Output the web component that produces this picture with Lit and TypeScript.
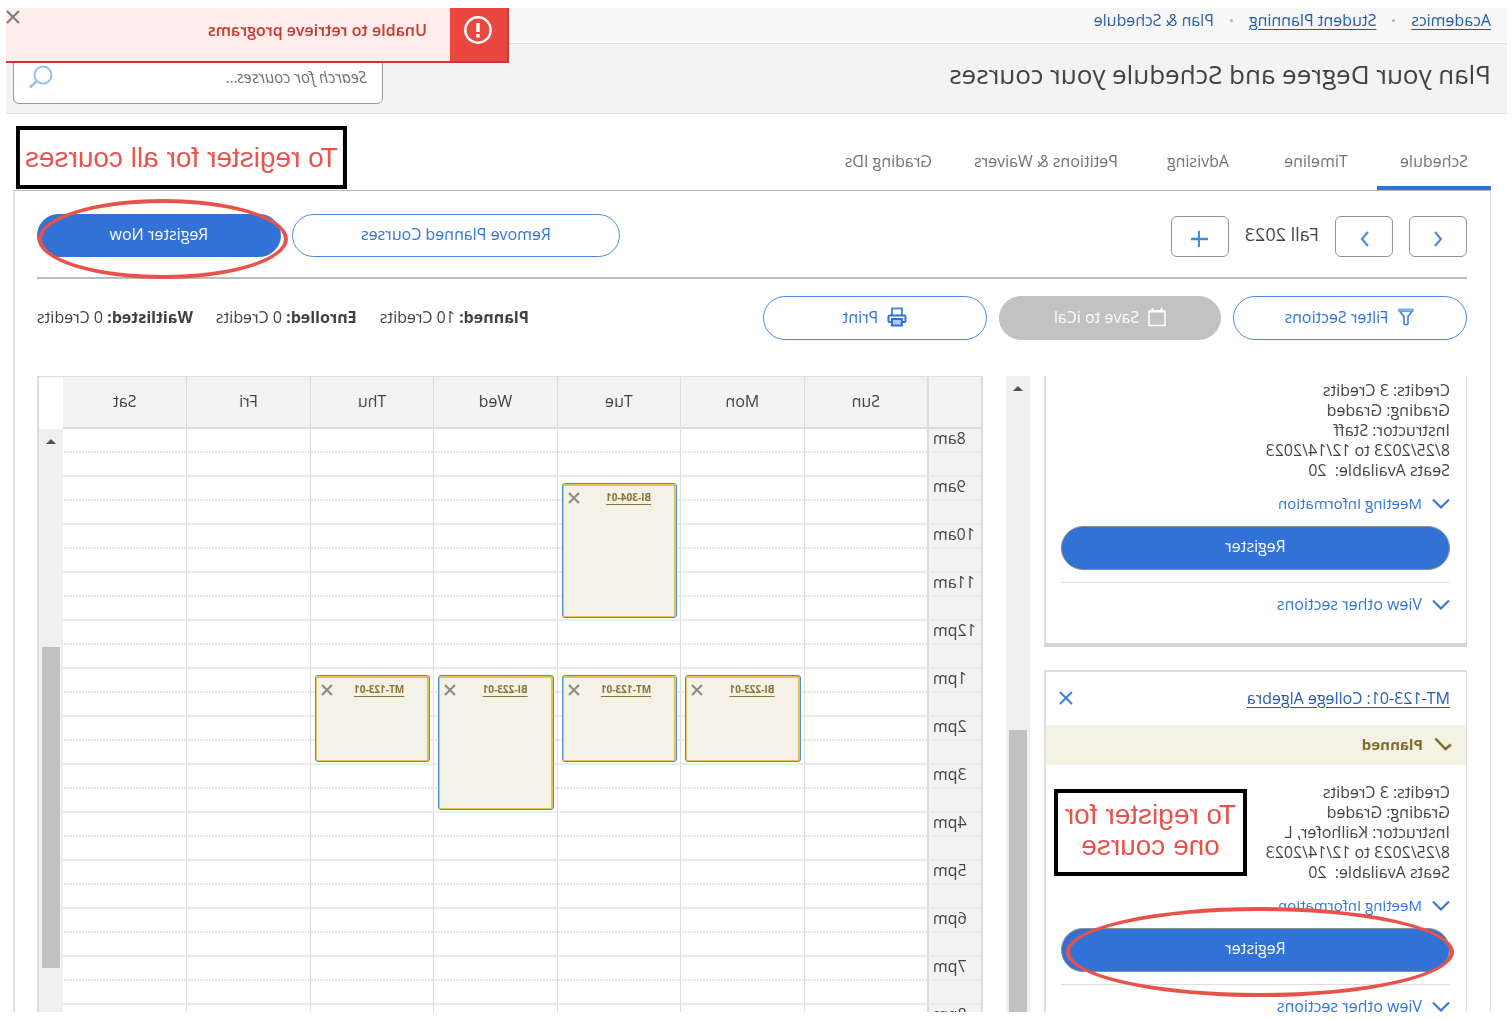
import { LitElement, html, svg, css, nothing } from "lit";
import { customElement, property } from "lit/decorators.js";

interface Section {
  title: string;
  instructor: string;
  seats: number;
}

interface CalendarEvent {
  day: string;
  hour: string;
  code: string;
  height: number;
}

const DAYS = ["Sun", "Mon", "Tue", "Wed", "Thu", "Fri", "Sat"];
const HOURS = ["8am", "9am", "10am", "11am", "12pm", "1pm", "2pm", "3pm", "4pm", "5pm", "6pm", "7pm", "8pm"];
const EVENTS: CalendarEvent[] = [
  { day: "Tue", hour: "9am", code: "BI-304-01", height: 135 },
  { day: "Mon", hour: "1pm", code: "BI-223-01", height: 87 },
  { day: "Tue", hour: "1pm", code: "MT-123-01", height: 87 },
  { day: "Wed", hour: "1pm", code: "BI-223-01", height: 135 },
  { day: "Thu", hour: "1pm", code: "MT-123-01", height: 87 },
];
const TABS = ["Schedule", "Timeline", "Advising", "Petitions & Waivers", "Grading IDs"];
const TOTALS = [
  ["Planned:", "10 Credits"],
  ["Enrolled:", "0 Credits"],
  ["Waitlisted:", "0 Credits"],
];

const icon = (w: number, h: number, body: unknown) =>
  html`<svg width=${w} height=${h} viewBox="0 0 ${w} ${h}" fill="none" stroke="currentColor" aria-hidden="true">${body}</svg>`;

const chevronLeft = icon(12, 18, svg`<path d="M9 2 L3 9 L9 16" stroke-width="2"/>`);
const chevronRight = icon(12, 18, svg`<path d="M2 2 L8 9 L2 16" stroke-width="2"/>`);
const chevronDown = icon(18, 12, svg`<path d="M1 1.500 L9 9.500 L17 1.500" stroke-width="2"/>`);
const plus = icon(18, 18, svg`<path d="M1 9 H18" stroke-width="2.500"/><path d="M10 1 V17" stroke-width="2"/>`);
const check = icon(18, 14, svg`<path d="M1 7.500 L6.500 12 L16.500 1.500" stroke-width="2.500"/>`);
const cross = icon(14, 14, svg`<path d="M1 1 L13 13 M13 1 L1 13" stroke-width="2"/>`);
const crossSmall = icon(12, 12, svg`<path d="M1 1 L11 11 M11 1 L1 11" stroke-width="2"/>`);
const magnifier = icon(24, 24, svg`<circle cx="10" cy="10" r="8.500" stroke-width="2"/><path d="M16 16 L23 22.500" stroke-width="2.500"/>`);
const alertCircle = icon(30, 30, svg`<circle cx="15" cy="15" r="12.700" stroke-width="2.500"/><path d="M15 8 V17" stroke-width="3.500"/><path d="M15 19 V22.500" stroke-width="3.500"/>`);
const funnel = icon(18, 18, svg`<path d="M2.500 3 H15.500 L11 8.500 V16 Q9 17.500 7 16 V8.500 Z" fill="#fff" stroke-width="1.500" stroke-linejoin="round"/><path d="M1 2 H17" stroke-width="3" stroke="#7daee8"/>`);
const calendarIcon = icon(18, 20, svg`<rect x="1" y="4" width="16" height="14.500" stroke-width="1.500"/><path d="M1 4.500 H17" stroke-width="2"/><path d="M4.500 1 V4 M13.500 1 V4" stroke-width="2"/>`);
const printer = icon(20, 20, svg`<path d="M5 9 V1.500 H15 V9" stroke="#4a8bdc" stroke-width="2"/><rect x="1.500" y="8.500" width="17" height="6.500" rx="1" stroke-width="2"/><rect x="5" y="12" width="10" height="6.500" fill="#a9cbf2" stroke-width="2"/>`);

@customElement("scroll-track")
class ScrollTrack extends LitElement {
  static styles = css`
    :host {
      display: flex;
      flex-direction: column;
      align-items: center;
      flex: 0 0 24px;
      background: #f0f0f0;
    }
    .arrow {
      width: 10px;
      height: 5px;
      flex: none;
      margin-top: 10px;
      background: #505050;
      clip-path: polygon(50% 0, 100% 100%, 0 100%);
    }
    .thumb {
      width: 18px;
      background: #c1c1c1;
    }
  `;
  @property({ type: Number }) before = 1;
  @property({ type: Number }) size = 1;
  @property({ type: Number }) after = 0;
  render() {
    return html`
      <div class="arrow"></div>
      <div style="flex:${this.before} 1 0"></div>
      <div class="thumb" style="flex:${this.size} 1 0"></div>
      <div style="flex:${this.after} 1 0"></div>
    `;
  }
}

@customElement("section-card")
class SectionCard extends LitElement {
  static styles = css`
    :host {
      display: block;
      position: relative;
      border: 1px solid #dedede;
      border-right-width: 2px;
      border-bottom: 4px solid #d4d4d4;
      color: #3f3f3f;
      font-size: 16px;
      line-height: 20px;
      margin-bottom: 23px;
    }
    :host([headed]) {
      border-top-width: 2px;
    }
    :host(:not([headed])) {
      border-top: 0;
    }
    button {
      font: inherit;
      cursor: pointer;
    }
    .head {
      display: flex;
      justify-content: space-between;
      align-items: center;
      box-sizing: border-box;
      height: 53px;
      padding: 0 13px 2px 16px;
    }
    .head a {
      color: #2159a8;
      text-underline-offset: 3px;
    }
    .close {
      display: flex;
      border: 0;
      padding: 0 0 0 2px;
      margin-right: 0;
      background: none;
      color: #3b7fd6;
    }
    .status {
      display: flex;
      align-items: center;
      gap: 11px;
      box-sizing: border-box;
      height: 40px;
      padding: 0 14px 2px;
      background: #f4f1e5;
      color: #7f6a26;
      font-weight: 700;
      font-size: 15px;
    }
    .body {
      padding: 4px 15px 29px 16px;
    }
    :host([headed]) .body {
      padding-top: 17px;
    }
    .seats {
      white-space: pre;
    }
    .line {
      margin: 0;
    }
    .toggle {
      display: flex;
      align-items: center;
      gap: 10px;
      border: 0;
      padding: 0;
      background: none;
      color: #2f72d6;
      font-size: 16px;
      line-height: 20px;
    }
    .meeting {
      margin: 13px 0;
      font-size: 15px;
    }
    .toggle svg {
      margin-top: 2px;
    }
    .action {
      position: relative;
      padding-bottom: 12px;
    }
    .register {
      display: block;
      width: 100%;
      height: 44px;
      padding: 0 0 4px;
      border: 1px solid #8d8f93;
      border-radius: 22px;
      background: #3172d6;
      color: #fff;
      font-weight: 500;
    }
    .more {
      border-top: 1px solid #dedede;
      padding-top: 11px;
    }
  `;
  @property({ attribute: false }) section!: Section;
  @property({ type: Boolean, reflect: true }) headed = false;
  render() {
    const s = this.section;
    return html`
      ${this.headed
        ? html`<div class="head">
              <a href="#section">${s.title}</a>
              <button class="close" aria-label="Remove section">${cross}</button>
            </div>
            <div class="status">${check}<span>Planned</span></div>`
        : nothing}
      <div class="body">
        <p class="line">Credits: 3 Credits</p>
        <p class="line">Grading: Graded</p>
        <p class="line">Instructor: ${s.instructor}</p>
        <p class="line">8/25/2023 to 12/14/2023</p>
        <p class="line seats">Seats Available:  ${s.seats}</p>
        <button class="toggle meeting">${chevronDown}<span>Meeting Information</span></button>
        <div class="action"><button class="register">Register</button><slot name="highlight"></slot></div>
        <div class="more"><button class="toggle">${chevronDown}<span>View other sections</span></button></div>
      </div>
      <slot name="note"></slot>
    `;
  }
}

@customElement("week-calendar")
class WeekCalendar extends LitElement {
  static styles = css`
    :host {
      display: flex;
      min-width: 0;
      min-height: 0;
      overflow: hidden;
      border: 1px solid #dcdcdc;
      border-width: 1px 2px 0;
      color: #3f3f3f;
      font-size: 16px;
    }
    table {
      flex: 1;
      width: 0;
      height: min-content;
      table-layout: fixed;
      border-collapse: separate;
      border-spacing: 0;
    }
    .time-col {
      width: 54px;
    }
    th {
      font-weight: 400;
      padding: 0;
      box-sizing: border-box;
    }
    thead th {
      height: 52px;
      padding-bottom: 2px;
      background: #f3f3f3;
      border-right: 1px solid #dcdcdc;
      border-bottom: 2px solid #dcdcdc;
    }
    thead th:first-child,
    tbody th {
      border-right: 2px solid #dcdcdc;
    }
    tr > :last-child {
      border-right: 0;
    }
    tbody th,
    td {
      height: 48px;
      box-sizing: border-box;
      border-bottom: 2px solid #ebebeb;
      background: repeating-linear-gradient(90deg, #e6e6e6 0 2px, transparent 2px 3px) 0 22px / 100% 2px no-repeat;
    }
    tbody th {
      background-color: #f3f3f3;
      text-align: right;
      vertical-align: top;
      line-height: 18px;
      padding-right: 4px;
    }
    td {
      position: relative;
      padding: 0;
      border-right: 1px solid #dcdcdc;
    }
    .event {
      position: absolute;
      z-index: 1;
      top: 6px;
      left: 3px;
      right: 4px;
      box-sizing: border-box;
      display: flex;
      align-items: flex-start;
      justify-content: space-between;
      padding: 6px 5px 0 25px;
      border: 1px solid #4d8bd6;
      border-radius: 3px;
      background: #f4f2e6;
      box-shadow: inset 1px 1px 0 1px #e4c653, inset 0 0 0 1px #e4c653;
    }
    .event a {
      color: #8a7233;
      font-size: 10px;
      font-weight: 700;
      line-height: 14px;
      text-decoration-thickness: 1px;
      text-underline-offset: 3px;
    }
    .event button {
      display: flex;
      border: 0;
      padding: 2px 0 0;
      background: none;
      color: #8a8a84;
    }
    .side {
      display: flex;
      flex-direction: column;
      flex: 0 0 24px;
    }
    .side scroll-track {
      flex: 1;
      margin-top: 52px;
    }
  `;
  render() {
    return html`
      <table>
        <colgroup>
          <col class="time-col" />
          ${DAYS.map(() => html`<col />`)}
        </colgroup>
        <thead>
          <tr>
            <th></th>
            ${DAYS.map((d) => html`<th scope="col">${d}</th>`)}
          </tr>
        </thead>
        <tbody>
          ${HOURS.map(
            (h) => html`<tr>
              <th scope="row">${h}</th>
              ${DAYS.map((d) => {
                const e = EVENTS.find((x) => x.day === d && x.hour === h);
                return html`<td>
                  ${e
                    ? html`<div class="event" style="height:${e.height}px">
                        <a href="#event">${e.code}</a>
                        <button aria-label="Remove ${e.code}">${crossSmall}</button>
                      </div>`
                    : nothing}
                </td>`;
              })}
            </tr>`
          )}
        </tbody>
      </table>
      <div class="side"><scroll-track .before=${203} .size=${321} .after=${44}></scroll-track></div>
    `;
  }
}

@customElement("app-root")
class AppRoot extends LitElement {
  static styles = css`
    :host {
      display: block;
      background: #fff;
      font-family: "Open Sans", "Noto Sans", sans-serif;
      font-size: 16px;
      color: #3f3f3f;
    }
    /* The whole page reads right to left as a mirror image. */
    .mirror {
      transform: scaleX(-1);
      height: 100vh;
      box-sizing: border-box;
      padding: 8px 6px 8px 5px;
      overflow: hidden;
    }
    .page {
      position: relative;
      display: flex;
      flex-direction: column;
      height: 100%;
      overflow: hidden;
    }
    button {
      font: inherit;
      cursor: pointer;
    }
    .crumbs {
      display: flex;
      align-items: center;
      padding: 0 16px 11px;
      border-bottom: 1px solid #dedede;
      background: #f7f7f7;
      line-height: 24px;
      color: #2b5c9e;
    }
    .crumbs a {
      color: #1f5aa6;
      text-underline-offset: 3px;
    }
    .dot {
      width: 3px;
      height: 3px;
      margin: 0 16px;
      border-radius: 50%;
      background: #b5b5b5;
    }
    .title-bar {
      display: flex;
      align-items: flex-start;
      justify-content: space-between;
      height: 69px;
      padding: 0 7px 0 16px;
      background: #f3f3f3;
      border-bottom: 1px solid #dedede;
    }
    h1 {
      margin: 14px 0 0;
      font-size: 26px;
      font-weight: 400;
      line-height: 32px;
    }
    .search {
      display: flex;
      align-items: center;
      box-sizing: border-box;
      width: 370px;
      height: 50px;
      margin-top: 10px;
      padding: 0 15px 4px;
      border: 1px solid #999;
      border-radius: 6px;
      background: #fff;
      color: #93c1f7;
    }
    .search input {
      flex: 1;
      min-width: 0;
      border: 0;
      padding: 0;
      outline: 0;
      background: none;
      font: inherit;
      font-style: italic;
      color: #3f3f3f;
    }
    .search input::placeholder {
      color: #6f6f6f;
      opacity: 1;
    }
    .alert {
      position: absolute;
      z-index: 2;
      top: 0;
      right: 0;
      display: flex;
      box-sizing: border-box;
      width: 503px;
      height: 55px;
      background: #fdeeed;
      border-bottom: 2px solid #c93833;
    }
    .alert-icon {
      box-sizing: border-box;
      display: flex;
      justify-content: center;
      width: 59px;
      padding-top: 7px;
      background: #eb4640;
      border-left: 2px solid #c93833;
      color: #fff;
    }
    .alert-text {
      flex: 1;
      padding: 10px 0 0 23px;
      font-weight: 600;
      line-height: 24px;
      color: #c8352f;
    }
    .alert-close {
      display: flex;
      align-self: flex-start;
      padding: 2px 0 0;
      border: 0;
      background: none;
      color: #7c7c7c;
    }
    .tabs {
      display: flex;
      gap: 4px;
      padding: 35px 7px 0 16px;
    }
    .tab {
      box-sizing: border-box;
      min-width: 114px;
      padding: 0 19px 13px;
      border-bottom: 4px solid transparent;
      color: #707070;
      line-height: 24px;
      text-align: center;
      text-decoration: none;
    }
    .tab.active {
      border-color: #3172d6;
    }
    .panel {
      display: flex;
      flex-direction: column;
      flex: 1;
      min-height: 0;
      box-sizing: border-box;
      margin: 0 7px 0 16px;
      padding: 23px 22px 0 23px;
      border: 1px solid #dedede;
      border-right-width: 2px;
      border-bottom: 0;
      border-top-color: #b8b8b8;
    }
    .term-row {
      display: flex;
      align-items: flex-end;
      gap: 16px;
      padding-bottom: 20px;
      border-bottom: 2px solid #bbb;
    }
    .square {
      display: flex;
      align-items: center;
      justify-content: center;
      box-sizing: border-box;
      width: 58px;
      height: 41px;
      padding: 4px 0 0;
      border: 1px solid #919191;
      border-radius: 6px;
      background: #fff;
      color: #4488da;
    }
    .term {
      font-size: 18px;
      line-height: 24px;
      padding-bottom: 11px;
    }
    .term-actions {
      display: flex;
      gap: 11px;
      margin-left: auto;
    }
    .pill {
      display: flex;
      align-items: center;
      justify-content: center;
      gap: 9px;
      box-sizing: border-box;
      height: 43px;
      padding: 0 0 3px;
      border: 1px solid #4a8bdc;
      border-radius: 22px;
      background: #fff;
      color: #2f72d6;
      font-size: 16px;
    }
    .remove {
      width: 328px;
    }
    .register-all {
      position: relative;
    }
    .primary {
      width: 244px;
      border-color: #3172d6;
      background: #3172d6;
      color: #fff;
      font-weight: 500;
    }
    .ring {
      position: absolute;
      border: 4px solid #e9524a;
      border-radius: 50%;
      pointer-events: none;
    }
    .ring-all {
      inset: -15px 1px -22px -7px;
    }
    .ring-one {
      inset: -21px 5px -13px -4px;
    }
    .tools {
      display: flex;
      align-items: center;
      gap: 12px;
      margin: 17px 0 36px;
    }
    .tools .pill {
      height: 44px;
      padding-bottom: 2px;
    }
    .filter {
      width: 234px;
    }
    .ical {
      width: 222px;
      border-color: #c2c2c2;
      background: #c2c2c2;
      color: #fff;
    }
    .print {
      width: 224px;
    }
    .totals {
      display: flex;
      gap: 23px;
      margin-left: auto;
      padding-bottom: 2px;
    }
    .planner {
      display: grid;
      grid-template-columns: minmax(0, 461fr) minmax(0, 946fr);
      grid-template-rows: minmax(0, 1fr);
      gap: 23px;
      flex: 1;
      min-height: 0;
    }
    .sections {
      display: flex;
      gap: 14px;
      min-height: 0;
    }
    .list {
      flex: 1;
      min-width: 0;
      overflow: hidden;
    }
    .note {
      position: absolute;
      box-sizing: border-box;
      border: 4px solid #000;
      background: #fff;
      color: #e9524a;
      font-family: "Liberation Sans", Arial, sans-serif;
      font-size: 28px;
      line-height: 31px;
      text-align: center;
    }
    .note-all {
      top: 118px;
      right: 10px;
      padding: 12px 5px;
      white-space: nowrap;
    }
    .note-one {
      top: 117px;
      right: 8px;
      width: 193px;
      padding: 6px 0 11px;
    }
  `;

  render() {
    return html`
      <div class="mirror">
        <div class="page">
          <nav class="crumbs" aria-label="Breadcrumb">
            <a href="#academics">Academics</a><span class="dot"></span>
            <a href="#planning">Student Planning</a><span class="dot"></span>
            <span>Plan &amp; Schedule</span>
          </nav>
          <header class="title-bar">
            <h1>Plan your Degree and Schedule your courses</h1>
            <label class="search">
              <input type="text" placeholder="Search for courses..." aria-label="Search for courses" />
              ${magnifier}
            </label>
          </header>
          <div class="alert" role="alert">
            <div class="alert-icon">${alertCircle}</div>
            <div class="alert-text">Unable to retrieve programs</div>
            <button class="alert-close" aria-label="Close">${cross}</button>
          </div>
          <nav class="tabs" aria-label="Planning">
            ${TABS.map((t, i) => html`<a class="tab ${i === 0 ? "active" : ""}" href="#tab">${t}</a>`)}
          </nav>
          <div class="note note-all">To register for all courses</div>
          <main class="panel">
            <div class="term-row">
              <button class="square" aria-label="Previous term">${chevronLeft}</button>
              <button class="square" aria-label="Next term">${chevronRight}</button>
              <span class="term">Fall 2023</span>
              <button class="square" aria-label="Add a term">${plus}</button>
              <div class="term-actions">
                <button class="pill remove">Remove Planned Courses</button>
                <div class="register-all">
                  <button class="pill primary">Register Now</button>
                  <div class="ring ring-all"></div>
                </div>
              </div>
            </div>
            <div class="tools">
              <button class="pill filter">${funnel}<span>Filter Sections</span></button>
              <button class="pill ical" disabled>${calendarIcon}<span>Save to iCal</span></button>
              <button class="pill print">${printer}<span>Print</span></button>
              <div class="totals">
                ${TOTALS.map(([k, v]) => html`<span><b>${k}</b> ${v}</span>`)}
              </div>
            </div>
            <div class="planner">
              <div class="sections">
                <div class="list">
                  <section-card .section=${{ title: "", instructor: "Staff", seats: 20 }}></section-card>
                  <section-card headed .section=${{ title: "MT-123-01: College Algebra", instructor: "Kailhofer, L", seats: 20 }}>
                    <div class="ring ring-one" slot="highlight"></div>
                    <div class="note note-one" slot="note">To register for one course</div>
                  </section-card>
                </div>
                <scroll-track .before=${339} .size=${282} .after=${0}></scroll-track>
              </div>
              <week-calendar></week-calendar>
            </div>
          </main>
        </div>
      </div>
    `;
  }
}
